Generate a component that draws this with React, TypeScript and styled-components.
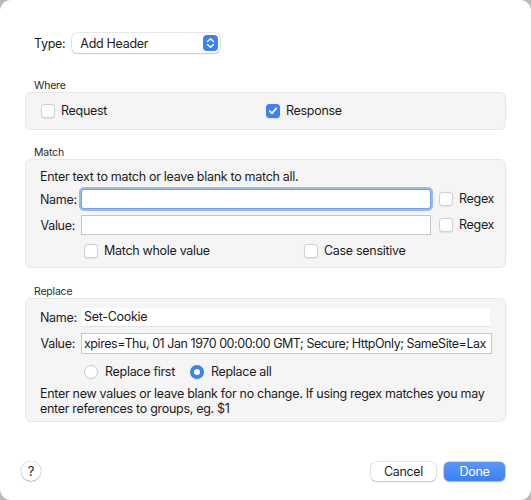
import styled, {createGlobalStyle} from "styled-components";

const GlobalStyle = createGlobalStyle`
  html, body {
    margin: 0;
    padding: 0;
    background: #b9b9b9;
    overflow: hidden;
  }
  body {
    font-family: "Inter", "Liberation Sans", sans-serif;
    font-size: 12.5px;
    letter-spacing: -0.3px;
    color: #1c1c1c;
    -webkit-font-smoothing: antialiased;
  }
`

const blue = "#3b82f6"

type CheckProps = {
    checked?: boolean
    label: string
}

function Check(props: CheckProps) {
    return (
        <StyledCheckLabel>
            <StyledCheckBox $checked={props.checked}>
                {props.checked && (
                    <svg width="10" height="10" viewBox="0 0 10 10">
                        <path d="M1.8 5.2 L4 7.4 L8.2 2.4" fill="none" stroke="#fff" strokeWidth="1.8"
                              strokeLinecap="round" strokeLinejoin="round"/>
                    </svg>
                )}
            </StyledCheckBox>
            {props.label}
        </StyledCheckLabel>
    )
}

function Radio(props: CheckProps) {
    return (
        <StyledCheckLabel>
            <StyledRadio $checked={props.checked}/>
            {props.label}
        </StyledCheckLabel>
    )
}

export default function App() {
    return (
        <>
            <GlobalStyle/>
            <StyledWindow>
                <StyledTypeRow>
                    <span>Type:</span>
                    <StyledPopup>
                        Add Header
                        <StyledStepper>
                            <svg width="9" height="12" viewBox="0 0 9 12">
                                <path d="M1.5 4.5 L4.5 1.7 L7.5 4.5 M1.5 7.5 L4.5 10.3 L7.5 7.5" fill="none"
                                      stroke="#fff" strokeWidth="1.5" strokeLinecap="round" strokeLinejoin="round"/>
                            </svg>
                        </StyledStepper>
                    </StyledPopup>
                </StyledTypeRow>

                <StyledSectionTitle>Where</StyledSectionTitle>
                <StyledWhereBox>
                    <Check label="Request"/>
                    <Check label="Response" checked/>
                </StyledWhereBox>

                <StyledSectionTitle>Match</StyledSectionTitle>
                <StyledMatchBox>
                    <StyledHint>Enter text to match or leave blank to match all.</StyledHint>
                    <StyledFieldRow>
                        <StyledFieldLabel>Name:</StyledFieldLabel>
                        <StyledField $focused/>
                        <Check label="Regex"/>
                    </StyledFieldRow>
                    <StyledFieldRow>
                        <StyledFieldLabel>Value:</StyledFieldLabel>
                        <StyledField/>
                        <Check label="Regex"/>
                    </StyledFieldRow>
                    <StyledOptionRow>
                        <Check label="Match whole value"/>
                        <Check label="Case sensitive"/>
                    </StyledOptionRow>
                </StyledMatchBox>

                <StyledSectionTitle>Replace</StyledSectionTitle>
                <StyledReplaceBox>
                    <StyledReplaceRow>
                        <StyledFieldLabel>Name:</StyledFieldLabel>
                        <StyledPlainField>Set-Cookie</StyledPlainField>
                    </StyledReplaceRow>
                    <StyledReplaceRow>
                        <StyledFieldLabel>Value:</StyledFieldLabel>
                        <StyledValueField>
                            <span>xpires=Thu, 01 Jan 1970 00:00:00 GMT; Secure; HttpOnly; SameSite=Lax</span>
                        </StyledValueField>
                    </StyledReplaceRow>
                    <StyledRadioRow>
                        <Radio label="Replace first"/>
                        <Radio label="Replace all" checked/>
                    </StyledRadioRow>
                    <StyledNote>
                        Enter new values or leave blank for no change. If using regex matches you may enter
                        references to groups, eg. $1
                    </StyledNote>
                </StyledReplaceBox>

                <StyledFooter>
                    <StyledHelp>?</StyledHelp>
                    <StyledButtons>
                        <StyledButton>Cancel</StyledButton>
                        <StyledButton $primary>Done</StyledButton>
                    </StyledButtons>
                </StyledFooter>
            </StyledWindow>
        </>
    )
}

const StyledWindow = styled.div`
  box-sizing: border-box;
  width: 531px;
  height: 500px;
  background: #fff;
  border-radius: 11px;
  padding: 33px 25px 0 25px;
  display: flex;
  flex-direction: column;
`

const StyledTypeRow = styled.div`
  display: flex;
  align-items: center;
  gap: 7px;
  padding-left: 9px;
  height: 20px;
  margin-bottom: 27px;
`

const StyledPopup = styled.div`
  position: relative;
  box-sizing: border-box;
  width: 148px;
  height: 20px;
  border-radius: 5px;
  background: #fff;
  box-shadow: 0 0 0 0.5px rgba(0, 0, 0, 0.18), 0 1px 1.5px rgba(0, 0, 0, 0.14);
  display: flex;
  align-items: center;
  padding-left: 8px;
`

const StyledStepper = styled.span`
  position: absolute;
  right: 2px;
  top: 2px;
  width: 15px;
  height: 16px;
  border-radius: 4px;
  background: ${blue};
  display: flex;
  align-items: center;
  justify-content: center;
`

const StyledSectionTitle = styled.div`
  font-size: 10.5px;
  letter-spacing: -0.2px;
  line-height: 12px;
  padding-left: 9px;
  color: #2a2a2a;
`

const StyledBox = styled.div`
  box-sizing: border-box;
  background: #f5f5f5;
  border: 1px solid #e8e8e8;
  border-radius: 6px;
`

const StyledWhereBox = styled(StyledBox)`
  height: 38px;
  display: grid;
  grid-template-columns: 225px 1fr;
  align-items: center;
  padding: 0 15px;
  margin-bottom: 17px;
`

const StyledMatchBox = styled(StyledBox)`
  height: 109px;
  padding: 9px 14px 0 14px;
  margin-bottom: 18px;
`

const StyledReplaceBox = styled(StyledBox)`
  height: 124px;
  padding: 9px 14px 0 14px;
`

const StyledHint = styled.div`
  line-height: 16px;
  margin-bottom: 4px;
`

const StyledFieldRow = styled.div`
  display: grid;
  grid-template-columns: 35px 350px auto;
  column-gap: 6px;
  align-items: center;
  height: 20px;
  margin-bottom: 6px;

  & > label {
    margin-left: 2px;
  }
`

const StyledFieldLabel = styled.span`
  text-align: right;
  white-space: nowrap;
`

const StyledField = styled.div<{ $focused?: boolean }>`
  box-sizing: border-box;
  height: 20px;
  background: #fff;
  border: 1px solid ${p => p.$focused ? "#6f9ef2" : "#c6c6c6"};
  box-shadow: ${p => p.$focused ? "0 0 0 2px rgba(74, 138, 244, 0.55)" : "none"};
  border-radius: ${p => p.$focused ? "3px" : "0"};
`

const StyledOptionRow = styled.div`
  display: grid;
  grid-template-columns: 220px auto;
  margin-left: 44px;
  margin-top: 8px;
`

const StyledReplaceRow = styled.div`
  display: grid;
  grid-template-columns: 35px 1fr;
  column-gap: 6px;
  align-items: center;
  margin-bottom: 6px;
`

const StyledPlainField = styled.div`
  box-sizing: border-box;
  height: 19px;
  line-height: 18px;
  background: #fff;
  border-bottom: 1px solid #e3e3e3;
  padding-left: 3px;
  margin-right: 1px;
`

const StyledValueField = styled.div`
  box-sizing: border-box;
  height: 21px;
  line-height: 19px;
  letter-spacing: -0.45px;
  background: #fff;
  border: 1px solid #c6c6c6;
  margin-right: -1px;
  overflow: hidden;
  white-space: nowrap;
  padding-left: 2px;
`

const StyledRadioRow = styled.div`
  display: flex;
  gap: 15px;
  margin-left: 44px;
  margin-top: 10px;
  height: 16px;
  align-items: center;
`

const StyledNote = styled.div`
  line-height: 15px;
  margin-top: 6px;
`

const StyledCheckLabel = styled.label`
  display: inline-flex;
  align-items: center;
  gap: 5px;
  white-space: nowrap;
  line-height: 16px;
`

const StyledCheckBox = styled.span<{ $checked?: boolean }>`
  box-sizing: border-box;
  width: 14px;
  height: 14px;
  border-radius: 3.5px;
  display: inline-flex;
  align-items: center;
  justify-content: center;
  background: ${p => p.$checked ? blue : "#fff"};
  border: ${p => p.$checked ? "none" : "1px solid #cfcfcf"};
  box-shadow: 0 0.5px 1px rgba(0, 0, 0, 0.08);
  margin-right: 1px;
`

const StyledRadio = styled.span<{ $checked?: boolean }>`
  box-sizing: border-box;
  width: 14px;
  height: 14px;
  border-radius: 50%;
  display: inline-block;
  background: #fff;
  border: ${p => p.$checked ? `4px solid ${blue}` : "1px solid #cfcfcf"};
  box-shadow: 0 0.5px 1px rgba(0, 0, 0, 0.08);
  margin-right: 2px;
`

const StyledFooter = styled.div`
  margin-top: auto;
  margin-bottom: 19px;
  margin-left: -4px;
  margin-right: 1px;
  display: flex;
  justify-content: space-between;
  align-items: center;
`

const StyledHelp = styled.div`
  width: 20px;
  height: 20px;
  border-radius: 50%;
  background: #fff;
  box-shadow: 0 0 0 0.5px rgba(0, 0, 0, 0.2), 0 1px 1.5px rgba(0, 0, 0, 0.15);
  display: flex;
  align-items: center;
  justify-content: center;
  font-size: 13px;
`

const StyledButtons = styled.div`
  display: flex;
  gap: 8px;
`

const StyledButton = styled.button<{ $primary?: boolean }>`
  font-family: inherit;
  font-size: 12.5px;
  letter-spacing: -0.3px;
  height: 19px;
  min-width: ${p => p.$primary ? "61px" : "65px"};
  padding: 0 10px;
  border: none;
  border-radius: 5px;
  color: ${p => p.$primary ? "#fff" : "#1f1f1f"};
  background: ${p => p.$primary ? "linear-gradient(#5a97f8, #3b80f5)" : "#fff"};
  box-shadow: ${p => p.$primary
          ? "0 0 0 0.5px rgba(30, 90, 210, 0.5), 0 1px 1.5px rgba(0, 0, 0, 0.15)"
          : "0 0 0 0.5px rgba(0, 0, 0, 0.2), 0 1px 1.5px rgba(0, 0, 0, 0.15)"};
`
